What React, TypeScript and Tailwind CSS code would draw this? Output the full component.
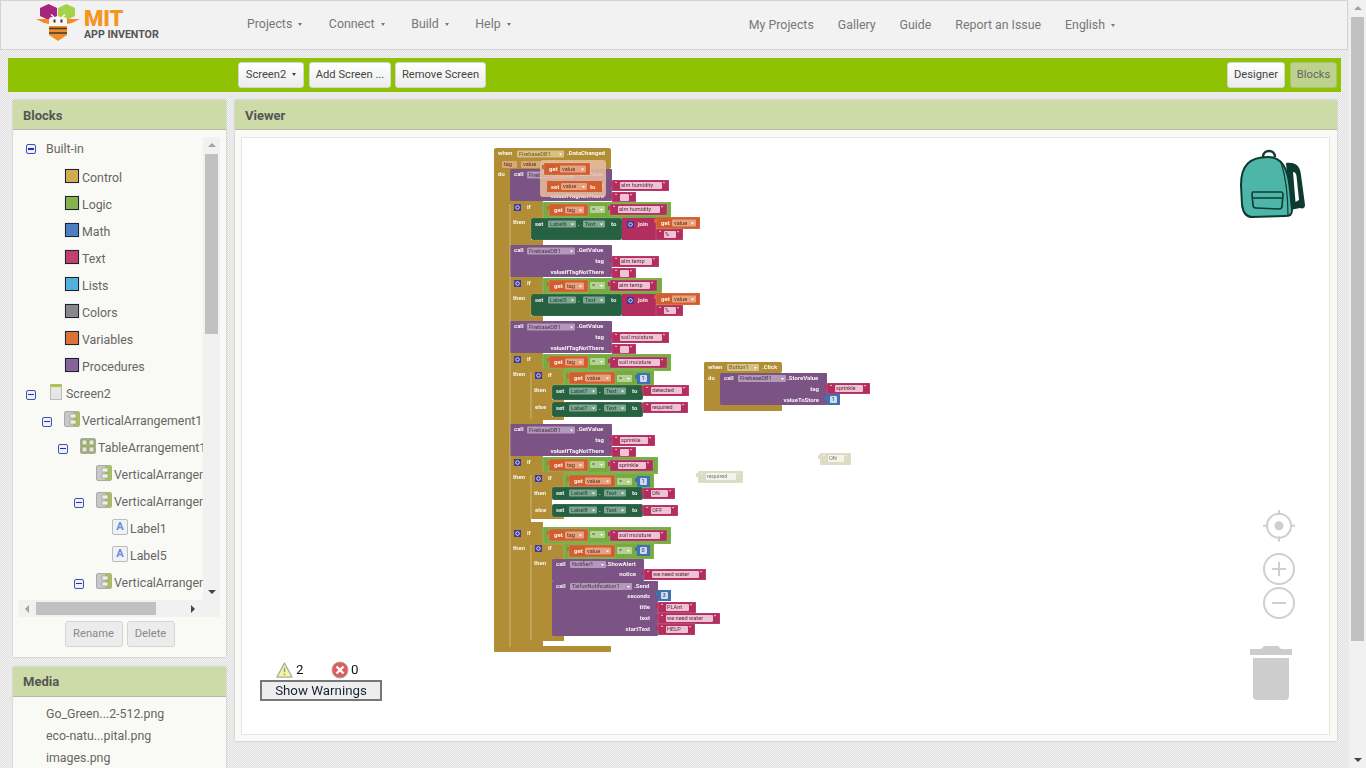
import React from 'react';

const GOLD = '#B18E35';
const RIM = '#d8c68f';
const PURPLE = '#7C5385';
const PINK = '#B32D5E';
const ORANGE = '#D05F2D';
const LOGIC = '#77AB41';
const SETTER = '#266141';
const MATH = '#3F71B5';

const dotted =
  'bg-[conic-gradient(#e2e2e2_25%,#f1f1f1_0_50%,#e2e2e2_0_75%,#f1f1f1_0)] bg-[length:2px_2px]';

type BoxProps = { x: number; y: number; w: number; h: number; c: string; r?: number; o?: number };

const Box = ({ x, y, w, h, c, r = 0.8, o }: BoxProps) => (
  <rect x={x} y={y} width={w} height={h} rx={r} fill={c} opacity={o} />
);

const Lbl = ({ x, y, t, end, c = '#fff' }: { x: number; y: number; t: string; end?: boolean; c?: string }) => (
  <text x={x} y={y} fontSize="6" fontWeight="700" fill={c} textAnchor={end ? 'end' : 'start'} opacity="0.92">
    {t}
  </text>
);

const Fld = ({ x, y, w, t, c = '#fff', ink = '#444', drop = true }: { x: number; y: number; w: number; t: string; c?: string; ink?: string; drop?: boolean }) => (
  <g>
    <rect x={x} y={y} width={w} height="7" rx="1" fill={c} opacity="0.6" />
    <text x={x + 2} y={y + 5.4} fontSize="5.6" fill={ink}>
      {t}
    </text>
    {drop && <path d={`M${x + w - 5} ${y + 3}h3l-1.5 2z`} fill="#fff" />}
  </g>
);

const Str = ({ x, y, w, t, h = 11, c = PINK, ink = '#5a2a3c', f = '#eec3d3' }: { x: number; y: number; w: number; t: string; h?: number; c?: string; ink?: string; f?: string }) => (
  <g>
    <rect x={x - 2} y={y + 2} width="3" height="4" fill={c} />
    <rect x={x} y={y} width={w} height={h} fill={c} stroke="#fff" strokeOpacity="0.3" strokeWidth="0.5" />
    <text x={x + 3} y={y + 6} fontSize="6" fill="#fff">
      “
    </text>
    <rect x={x + 8} y={y + 2} width={w - 15} height="7" rx="1" fill={f} />
    <text x={x + 9} y={y + 7.4} fontSize="5.6" fill={ink}>
      {t}
    </text>
    <text x={x + w - 6} y={y + 6} fontSize="6" fill="#fff">
      ”
    </text>
  </g>
);

const Num = ({ x, y, t }: { x: number; y: number; t: string }) => (
  <g>
    <rect x={x - 2} y={y + 2} width="3" height="4" fill={MATH} />
    <rect x={x} y={y} width="13" height="11" fill={MATH} />
    <rect x={x + 3} y={y + 2} width="7" height="7" rx="1" fill="#cfdcf0" />
    <text x={x + 4.6} y={y + 7.4} fontSize="5.6" fill="#234">
      {t}
    </text>
  </g>
);

const Get = ({ x, y, w, t }: { x: number; y: number; w: number; t: string }) => (
  <g>
    <rect x={x - 2} y={y + 2} width="3" height="4" fill={ORANGE} />
    <rect x={x} y={y} width={w} height="12" fill={ORANGE} stroke="#fff" strokeOpacity="0.3" strokeWidth="0.5" />
    <Lbl x={x + 5} y={y + 8} t="get" />
    <Fld x={x + 16} y={y + 2.5} w={w - 20} t={t} c="#f3cdb8" ink="#5a3320" />
  </g>
);

const Mut = ({ x, y }: { x: number; y: number }) => (
  <g>
    <rect x={x} y={y} width="7" height="7" fill="#3f3a9a" />
    <circle cx={x + 3.5} cy={y + 3.5} r="1.8" fill="none" stroke="#fff" strokeWidth="0.8" />
  </g>
);

// the "get x = y" socket of an if block
const Cond = ({ x, y, w, h = 17, children }: { x: number; y: number; w: number; h?: number; children: React.ReactNode }) => (
  <g>
    <rect x={x - 2} y={y + 3} width="3" height="4" fill={LOGIC} />
    <rect x={x} y={y} width={w} height={h} fill={LOGIC} stroke="#fff" strokeOpacity="0.3" strokeWidth="0.5" />
    {children}
  </g>
);

const Eq = ({ x, y }: { x: number; y: number }) => <Fld x={x} y={y} w={15} t=" =" c="#dfeccb" ink="#345" />;

const SetRow = ({ x, y, w, h, name }: { x: number; y: number; w: number; h: number; name: string }) => (
  <g>
    <rect x={x} y={y} width={w} height={h} rx="2" fill={SETTER} stroke="#fff" strokeOpacity="0.25" strokeWidth="0.5" />
    <Lbl x={x + 4} y={y + 8} t="set" />
    <Fld x={x + 17} y={y + 2.5} w={28} t={name} c="#b9d4c4" ink="#23473a" />
    <Lbl x={x + 47} y={y + 8} t="." />
    <Fld x={x + 52} y={y + 2.5} w={22} t="Text" c="#b9d4c4" ink="#23473a" />
    <Lbl x={x + 80} y={y + 8} t="to" />
  </g>
);

const CallGetValue = ({ y, tag, emptyY }: { y: number; tag: React.ReactNode; emptyY: number }) => (
  <g>
    <Box x={510} y={y} w={102} h={32} c={PURPLE} />
    <Lbl x={514} y={y + 7} t="call" />
    <Fld x={527} y={y + 2.5} w={48} t="FirebaseDB1" c="#d8c8dc" ink="#4a3350" />
    <Lbl x={577} y={y + 7} t=".GetValue" />
    <Lbl x={604} y={y + 18} t="tag" end />
    <Lbl x={604} y={y + 29} t="valueIfTagNotThere" end />
    {tag}
    <Str x={612} y={emptyY} w={24} t="" h={10} />
  </g>
);

const IfHead = ({ y, x = 510 }: { y: number; x?: number }) => (
  <g>
    <Mut x={x + 4} y={y + 3} />
    <Lbl x={x + 17} y={y + 8} t="if" />
    <Lbl x={x + 3} y={y + 23} t="then" />
  </g>
);

const JoinRow = ({ y }: { y: number }) => (
  <g>
    <Box x={622} y={y} w={61} h={22} c={PINK} r={0} />
    <Mut x={627} y={y + 3} />
    <Lbl x={638} y={y + 8} t="join" />
    <Get x={656} y={y - 1} w={44} t="value" />
    <Str x={656} y={y + 11} w={27} t=" %" />
  </g>
);

const Workspace = () => (
  <svg
    viewBox="242 138 1087 596"
    className="absolute inset-0 h-full w-full blur-[0.5px]"
    fontFamily="Roboto, sans-serif"
  >
    {/* when FirebaseDB1.DataChanged */}
    <Box x={494} y={148} w={117} h={21} c={GOLD} r={2} />
    <Box x={494} y={160} w={16} h={492} c={GOLD} r={2} />
    <Box x={494} y={646} w={117} h={6} c={GOLD} r={1} />
    <Lbl x={498} y={155} t="when" />
    <Fld x={517} y={150.5} w={47} t="FirebaseDB1" c="#efe2bb" ink="#6c5a28" />
    <Lbl x={567} y={155} t=".DataChanged" />
    <Fld x={502} y={161} w={15} t="tag" c="#f2b9a0" ink="#5a3320" drop={false} />
    <Fld x={521} y={161} w={19} t="value" c="#f2b9a0" ink="#5a3320" drop={false} />
    <Lbl x={498} y={176} t="do" />

    {/* humidity */}
    <CallGetValue y={169} tag={<Str x={612} y={180} w={57} t="alm humidity" />} emptyY={192} />
    <Box x={510} y={201} w={33} h={18} c={GOLD} r={0} />
    <Box x={510} y={201} w={21} h={44} c={GOLD} r={0} />
    <Box x={510} y={240} w={33} h={5} c={GOLD} r={0} />
    <IfHead y={201} />
    <Cond x={543} y={202} w={128}>
      <Get x={549} y={204} w={39} t="tag" />
      <Eq x={590} y={206} />
      <Str x={610} y={204} w={57} t="alm humidity" />
    </Cond>
    <SetRow x={531} y={218} w={91} h={22} name="Label6" />
    <JoinRow y={218} />

    {/* temperature */}
    <CallGetValue y={245} tag={<Str x={612} y={256} w={47} t="alm temp" />} emptyY={268} />
    <Box x={510} y={277} w={33} h={18} c={GOLD} r={0} />
    <Box x={510} y={277} w={21} h={44} c={GOLD} r={0} />
    <Box x={510} y={316} w={33} h={5} c={GOLD} r={0} />
    <IfHead y={277} />
    <Cond x={543} y={278} w={119}>
      <Get x={549} y={280} w={39} t="tag" />
      <Eq x={590} y={282} />
      <Str x={610} y={280} w={47} t="alm temp" />
    </Cond>
    <SetRow x={531} y={294} w={91} h={22} name="Label5" />
    <JoinRow y={294} />

    {/* soil moisture */}
    <CallGetValue y={321} tag={<Str x={612} y={332} w={57} t="soil moisture" />} emptyY={344} />
    <Box x={510} y={353} w={33} h={18} c={GOLD} r={0} />
    <Box x={510} y={353} w={21} h={71} c={GOLD} r={0} />
    <Box x={510} y={419} w={33} h={5} c={GOLD} r={0} />
    <IfHead y={353} />
    <Cond x={543} y={354} w={128}>
      <Get x={549} y={356} w={39} t="tag" />
      <Eq x={590} y={358} />
      <Str x={610} y={357} w={57} t="soil moisture" />
    </Cond>
    <Box x={531} y={369} w={33} h={17} c={GOLD} r={0} />
    <Box x={531} y={369} w={21} h={50} c={GOLD} r={0} />
    <Box x={531} y={400} w={33} h={3} c={GOLD} r={0} />
    <Box x={531} y={417} w={33} h={3} c={GOLD} r={0} />
    <Box x={530.6} y={372} w={0.7} h={47} c={RIM} r={0} />
    <IfHead y={369} x={531} />
    <Lbl x={535} y={409} t="else" />
    <Cond x={564} y={370} w={90} h={18}>
      <Get x={569} y={372} w={46} t="value" />
      <Eq x={617} y={375} />
      <Num x={637} y={373} t="1" />
    </Cond>
    <SetRow x={552} y={385} w={91} h={15} name="Label7" />
    <Str x={643} y={385} w={46} t="detected" />
    <SetRow x={552} y={402} w={91} h={15} name="Label7" />
    <Str x={643} y={402} w={45} t="required" />

    {/* sprinkle */}
    <CallGetValue y={424} tag={<Str x={612} y={435} w={43} t="sprinkle" />} emptyY={447} />
    <Box x={510} y={456} w={33} h={18} c={GOLD} r={0} />
    <Box x={510} y={456} w={21} h={190} c={GOLD} r={0} />
    <Box x={510} y={522} w={33} h={5} c={GOLD} r={0} />
    <IfHead y={456} />
    <Cond x={543} y={457} w={115}>
      <Get x={549} y={459} w={39} t="tag" />
      <Eq x={590} y={461} />
      <Str x={610} y={460} w={43} t="sprinkle" />
    </Cond>
    <Box x={531} y={472} w={33} h={17} c={GOLD} r={0} />
    <Box x={531} y={472} w={21} h={47} c={GOLD} r={0} />
    <Box x={531} y={516} w={33} h={3} c={GOLD} r={0} />
    <Box x={530.6} y={475} w={0.7} h={44} c={RIM} r={0} />
    <IfHead y={472} x={531} />
    <Lbl x={535} y={512} t="else" />
    <Cond x={564} y={473} w={90} h={17}>
      <Get x={569} y={475} w={46} t="value" />
      <Eq x={617} y={478} />
      <Num x={637} y={476} t="1" />
    </Cond>
    <SetRow x={552} y={487} w={91} h={13} name="Label8" />
    <Str x={643} y={488} w={32} t="ON" />
    <SetRow x={552} y={504} w={91} h={13} name="Label8" />
    <Str x={643} y={505} w={35} t="OFF" />

    {/* third if, notifications */}
    <Box x={510} y={527} w={33} h={18} c={GOLD} r={0} />
    <Box x={510} y={641} w={33} h={6} c={GOLD} r={0} />
    <Box x={531} y={542} w={33} h={17} c={GOLD} r={0} />
    <Box x={531} y={542} w={21} h={98} c={GOLD} r={0} />
    <Box x={531} y={636} w={33} h={5} c={GOLD} r={0} />
    <Box x={530.6} y={545} w={0.7} h={95} c={RIM} r={0} />
    <Box x={509.6} y={204} w={0.7} h={443} c={RIM} r={0} />
    <IfHead y={527} />
    <IfHead y={542} x={531} />
    <Cond x={543} y={527} w={128}>
      <Get x={549} y={529} w={39} t="tag" />
      <Eq x={590} y={531} />
      <Str x={610} y={530} w={57} t="soil moisture" />
    </Cond>
    <Cond x={564} y={543} w={90} h={16}>
      <Get x={569} y={545} w={46} t="value" />
      <Eq x={617} y={547} />
      <Num x={637} y={545} t="0" />
    </Cond>
    <Box x={552} y={559} w={92} h={22} c={PURPLE} />
    <Lbl x={556} y={566} t="call" />
    <Fld x={570} y={561} w={36} t="Notifier1" c="#d8c8dc" ink="#4a3350" />
    <Lbl x={606} y={566} t=".ShowAlert" />
    <Lbl x={636} y={576} t="notice" end />
    <Str x={644} y={569} w={62} t="we need water" />
    <Box x={552} y={581} w={106} h={55} c={PURPLE} />
    <Lbl x={556} y={588} t="call" />
    <Fld x={570} y={583} w={62} t="TaifunNotification1" c="#d8c8dc" ink="#4a3350" />
    <Lbl x={634} y={588} t=".Send" />
    <Lbl x={650} y={598} t="seconds" end />
    <Lbl x={650} y={609} t="title" end />
    <Lbl x={650} y={620} t="text" end />
    <Lbl x={650} y={631} t="startText" end />
    <Num x={658} y={590} t="3" />
    <Str x={658} y={602} w={38} t="PLAnt" />
    <Str x={658} y={613} w={62} t="we need water" />
    <Str x={658} y={624} w={37} t="HELP" />

    {/* dragged collapsed getters */}
    <rect x={540} y={160} width={66} height={37} rx="3" fill="#e8bea0" opacity="0.85" />
    <Get x={544} y={163} w={46} t="value" />
    <rect x={547} y={181} width={55} height={11} fill={ORANGE} />
    <Lbl x={551} y={189} t="set" />
    <Fld x={561} y={183} w={26} t="value" c="#f3cdb8" ink="#5a3320" />
    <Lbl x={590} y={189} t="to" />

    {/* when Button1.Click */}
    <Box x={704} y={362} w={78} h={11} c={GOLD} r={2} />
    <Box x={704} y={362} w={16} h={49} c={GOLD} r={2} />
    <Box x={704} y={405} w={78} h={6} c={GOLD} r={1} />
    <Lbl x={708} y={369} t="when" />
    <Fld x={727} y={364} w={32} t="Button1" c="#efe2bb" ink="#6c5a28" />
    <Lbl x={762} y={369} t=".Click" />
    <Lbl x={708} y={380} t="do" />
    <Box x={720} y={373} w={107} h={32} c={PURPLE} />
    <Lbl x={724} y={380} t="call" />
    <Fld x={738} y={375} w={48} t="FirebaseDB1" c="#d8c8dc" ink="#4a3350" />
    <Lbl x={787} y={380} t=".StoreValue" />
    <Lbl x={819} y={391} t="tag" end />
    <Lbl x={819} y={402} t="valueToStore" end />
    <Str x={827} y={383} w={43} t="sprinkle" />
    <Num x={827} y={394} t="1" />

    {/* disabled text blocks */}
    <Str x={820} y={453} w={31} t="ON" h={12} c="#dcdcc4" f="#f4f4ea" ink="#777" />
    <Str x={698} y={471} w={45} t="required" h={12} c="#dcdcc4" f="#f4f4ea" ink="#777" />
  </svg>
);

const Backpack = () => (
  <svg viewBox="1238 148 70 72" className="absolute left-[996px] top-[10px] h-[72px] w-[70px]">
    <path d="M1286 163 C1296 162 1300 166 1301 175 L1305 205 C1305 208 1303 209 1300 208 L1290 210 Z" fill="#0e3a2f" />
    <path d="M1293 172 C1295 172 1296 173 1296.5 176 L1299 200 L1295.5 202 Z" fill="#fff" />
    <path d="M1263 157 C1263 149 1275 149 1275 157" fill="none" stroke="#0e3a2f" strokeWidth="2.4" />
    <path
      d="M1241 185 C1241 165 1250 157 1268 157 C1282 157 1288 168 1290 190 L1292 210 C1292 215 1290 216 1285 216 L1252 217 C1246 217 1243 212 1242 205 Z"
      fill="#4db6a9"
      stroke="#0e3a2f"
      strokeWidth="2"
    />
    <path d="M1281 162 C1285 175 1288 195 1288 215" fill="none" stroke="#0e3a2f" strokeWidth="1.2" />
    <path
      d="M1253 192 L1281 192 C1283 192 1283 193 1283 195 L1282 206 C1282 208 1281 209 1279 209 L1256 208 C1254 208 1253 207 1253 205 L1252 195 C1252 193 1252 192 1253 192 Z M1252 198 L1283 198"
      fill="none"
      stroke="#0e3a2f"
      strokeWidth="1.6"
    />
  </svg>
);

const MapControls = () => (
  <svg viewBox="1245 505 52 200" className="absolute left-[1003px] top-[367px] h-[200px] w-[52px]" fill="none" stroke="#cfcfcf">
    <circle cx="1279" cy="525.7" r="12" strokeWidth="2" />
    <circle cx="1279" cy="525.7" r="4.5" fill="#cfcfcf" stroke="none" />
    <path d="M1279 510v5M1279 536.5v5M1263 525.7h5M1290 525.7h5" strokeWidth="2" />
    <circle cx="1279" cy="569" r="15" strokeWidth="2" />
    <path d="M1272 569h14M1279 562v14" strokeWidth="2" />
    <circle cx="1279" cy="603" r="15" strokeWidth="2" />
    <path d="M1272 603h14" strokeWidth="2" />
    <path
      d="M1250 649 H1261 L1264 646 H1278 L1281 649 H1292 V655 H1250 Z M1253 658 H1289 V696 Q1289 700 1285 700 H1257 Q1253 700 1253 696 Z"
      fill="#cdcdcd"
      stroke="none"
    />
  </svg>
);

const Warnings = () => (
  <div className="absolute left-[18px] top-[522px] flex w-[122px] flex-col font-['Roboto',sans-serif] text-[13.3px] text-[#111]">
    <div className="ml-[16px] flex h-[20px] items-center">
      <svg viewBox="0 0 18 17" className="h-[16px] w-[17px]">
        <path d="M9 1 L17 16 H1 Z" fill="#f3f3a0" stroke="#aaa" strokeWidth="1.4" strokeLinejoin="round" />
        <path d="M9 6v5M9 12.5v1.5" stroke="#999" strokeWidth="1.5" />
      </svg>
      <span className="ml-[3px] w-[35px]">2</span>
      <svg viewBox="0 0 18 18" className="h-[18px] w-[18px]">
        <circle cx="9" cy="9" r="8" fill="#e25b5b" stroke="#aaa" strokeWidth="1" />
        <path d="M5.5 5.5l7 7M12.5 5.5l-7 7" stroke="#fff" strokeWidth="2.4" />
      </svg>
      <span className="ml-[2px]">0</span>
    </div>
    <button className="h-[21px] w-[122px] border-2 border-[#777] bg-[#eee] text-[13.3px] leading-none text-[#1a2233]">
      Show Warnings
    </button>
  </div>
);

const LogoMark = () => (
  <svg viewBox="0 0 46 42" className="mb-[2px] h-[42px] w-[46px] shrink-0">
    <path d="M12.5 1 L21 5 V13 L12.5 17 L4 13 V5 Z" fill="#a5257d" />
    <path d="M30.5 1 L39 5 V13 L30.5 17 L22 13 V5 Z" fill="#a6d14a" />
    <path d="M0 16 H14 L13 21 L8 20 Z M44 16 H30 L31 21 L36 20 Z" fill="#f28c28" />
    <rect x="13" y="14" width="18" height="10" rx="3" fill="#f6f6f6" />
    <rect x="17.5" y="16.5" width="2" height="3" fill="#333" />
    <rect x="24.5" y="16.5" width="2" height="3" fill="#333" />
    <path d="M13 23 H31 V32 L22 38 L13 32 Z" fill="#f28c28" />
    <path d="M13 25.5 H31 M13 30 H31" stroke="#3a3a3a" strokeWidth="1.6" />
    <path d="M15 11.5 L18 14 M29 11.5 L26 14" stroke="#fff" strokeWidth="1.2" />
  </svg>
);

const NavItem = ({ label }: { label: string }) => (
  <span className="flex items-center gap-[6px] text-[12.35px] text-[#777]">
    {label}
    <span className="mt-[1px] h-0 w-0 border-x-[2.5px] border-t-[3px] border-x-transparent border-t-[#777]" />
  </span>
);

const ToolButton = ({ children, width, active = false }: { children: React.ReactNode; width: string; active?: boolean }) => (
  <div
    className={
      active
        ? `flex h-[26px] items-center justify-center rounded-[3px] border border-[#a9c276] bg-[#bdd28d] text-[11.2px] text-[#666] ${width}`
        : `flex h-[26px] items-center justify-center rounded-[3px] border border-[#d5d5d5] bg-gradient-to-b from-white to-[#ececec] text-[11.2px] text-[#444] ${width}`
    }
  >
    {children}
  </div>
);

const Toggle = () => (
  <span className="flex h-[10px] w-[10px] shrink-0 items-center justify-center rounded-[2px] border border-[#3f51b5] bg-[#eef0fa]">
    <span className="h-[1.5px] w-[6px] bg-[#2233aa]" />
  </span>
);

const categories = [
  ['Control', 'bg-[#CFAC50]'],
  ['Logic', 'bg-[#85B14F]'],
  ['Math', 'bg-[#4C7FBF]'],
  ['Text', 'bg-[#C23F70]'],
  ['Lists', 'bg-[#52B1DC]'],
  ['Colors', 'bg-[#888888]'],
  ['Variables', 'bg-[#DD7236]'],
  ['Procedures', 'bg-[#88639A]'],
];

const ArrangementIcon = ({ table = false }: { table?: boolean }) => (
  <svg viewBox="0 0 16 16" className="mb-[6px] block h-[16px] w-[16px] shrink-0">
    <rect x="0.5" y="0.5" width="15" height="15" rx="1.5" fill={table ? '#a9c64a' : '#c8c8c8'} stroke="#aaa" />
    {table ? (
      <path d="M2 2h5v5H2zM9 2h5v5H9zM2 9h5v5H2zM9 9h5v5H9z" fill="#e4e4e4" stroke="#777" strokeWidth="0.6" />
    ) : (
      <>
        <rect x="9" y="1" width="6" height="14" fill="#a9c64a" />
        <rect x="6" y="3" width="6" height="4" fill="#eee" stroke="#888" strokeWidth="0.5" />
        <rect x="6" y="9" width="6" height="4" fill="#eee" stroke="#888" strokeWidth="0.5" />
      </>
    )}
  </svg>
);

const LabelIcon = () => (
  <span className="mb-[6px] flex h-[16px] w-[16px] shrink-0 items-center justify-center rounded-[2px] border border-[#bbb] bg-[#eef2f8] text-[11px] font-bold leading-none text-[#6a8fcc]">
    A
  </span>
);

const BlocksPanel = () => (
  <section className="flex h-[557px] flex-col bg-[#F9FAF5] shadow-[0_0_2px_#bbb]">
    <h2 className="flex h-[30px] shrink-0 items-center border-b border-[#b5b9a5] bg-[#CDDBA9] px-[10px] pt-[2px] text-[13px] font-bold text-[#555]">
      Blocks
    </h2>
    <div className="relative mx-[6px] mt-[7px] h-[480px] overflow-hidden text-[12.35px] text-[#666]">
      <div className="w-[184px] overflow-hidden">
        <div className="flex h-[28px] items-center pb-[4px] pl-[7px]">
          <Toggle />
          <span className="ml-[10px]">Built-in</span>
        </div>
        {categories.map(([name, color]) => (
          <div key={name} className="flex h-[27px] items-center pl-[46px]">
            <span className={`mb-[6px] h-[14px] w-[14px] shrink-0 border border-[#222] shadow-[0_0_0_1px_#e8eef8] ${color}`} />
            <span className="ml-[3px] whitespace-nowrap">{name}</span>
          </div>
        ))}
        <div className="flex h-[27px] items-center pl-[7px]">
          <Toggle />
          <span className="mb-[6px] ml-[14px] h-[16px] w-[12px] shrink-0 rounded-[1px] border border-[#bbb] border-t-[3px] border-t-[#a9c64a] bg-[#e6e6e6]" />
          <span className="ml-[4px] whitespace-nowrap">Screen2</span>
        </div>
        <div className="flex h-[27px] items-center pl-[23px]">
          <Toggle />
          <span className="ml-[12px] shrink-0"><ArrangementIcon /></span>
          <span className="ml-[2px] whitespace-nowrap">VerticalArrangement1</span>
        </div>
        <div className="flex h-[27px] items-center pl-[39px]">
          <Toggle />
          <span className="ml-[12px] shrink-0"><ArrangementIcon table /></span>
          <span className="ml-[2px] whitespace-nowrap">TableArrangement1</span>
        </div>
        <div className="flex h-[27px] items-center pl-[77px]">
          <ArrangementIcon />
          <span className="ml-[2px] whitespace-nowrap">VerticalArrangement2</span>
        </div>
        <div className="flex h-[27px] items-center pl-[55px]">
          <Toggle />
          <span className="ml-[12px] shrink-0"><ArrangementIcon /></span>
          <span className="ml-[2px] whitespace-nowrap">VerticalArrangement3</span>
        </div>
        <div className="flex h-[27px] items-center pl-[93px]">
          <LabelIcon />
          <span className="ml-[2px]">Label1</span>
        </div>
        <div className="flex h-[27px] items-center pl-[93px]">
          <LabelIcon />
          <span className="ml-[2px]">Label5</span>
        </div>
        <div className="flex h-[27px] items-center pl-[55px]">
          <Toggle />
          <span className="ml-[12px] shrink-0"><ArrangementIcon /></span>
          <span className="ml-[2px] whitespace-nowrap">VerticalArrangement4</span>
        </div>
        <div className="flex h-[27px] items-center pl-[93px]">
          <LabelIcon />
        </div>
      </div>
      {/* tree scrollbars */}
      <div className="absolute right-0 top-0 flex h-[463px] w-[17px] flex-col items-center bg-[#f1f1f1]">
        <span className="mt-[6px] h-0 w-0 border-x-[4px] border-b-[4px] border-x-transparent border-b-[#a3a3a3]" />
        <span className="mt-[7px] h-[180px] w-[13px] bg-[#c1c1c1]" />
        <span className="mt-auto mb-[6px] h-0 w-0 border-x-[4px] border-t-[4px] border-x-transparent border-t-[#444]" />
      </div>
      <div className="absolute bottom-0 left-0 flex h-[17px] w-full items-center bg-[#f1f1f1]">
        <span className="ml-[6px] h-0 w-0 border-y-[4px] border-r-[4px] border-y-transparent border-r-[#a3a3a3]" />
        <span className="ml-[7px] h-[13px] w-[120px] bg-[#c1c1c1]" />
        <span className="ml-[35px] h-0 w-0 border-y-[4px] border-l-[4px] border-y-transparent border-l-[#444]" />
      </div>
    </div>
    <div className="mt-[4px] flex justify-center gap-[4px] text-[11.2px] text-[#8a8a8a]">
      <span className="flex h-[26px] w-[58px] items-center justify-center rounded-[3px] border border-[#d5d5d5] bg-[#ececec]">Rename</span>
      <span className="flex h-[26px] w-[48px] items-center justify-center rounded-[3px] border border-[#d5d5d5] bg-[#ececec]">Delete</span>
    </div>
  </section>
);

const MediaPanel = () => (
  <section className="mt-[10px] h-[140px] bg-[#F9FAF5] shadow-[0_0_2px_#bbb]">
    <h2 className="flex h-[30px] items-center border-b border-[#b5b9a5] bg-[#CDDBA9] px-[10px] text-[13px] font-bold text-[#555]">
      Media
    </h2>
    <ul className="pl-[33px] pt-[6px] text-[12.35px] leading-[22px] text-[#666]">
      <li>Go_Green...2-512.png</li>
      <li>eco-natu...pital.png</li>
      <li>images.png</li>
    </ul>
  </section>
);

const App: React.FC = () => {
  return (
    <div className="flex h-screen w-full overflow-hidden font-['Roboto',sans-serif]">
      <div className={`h-full w-[1349px] shrink-0 overflow-hidden ${dotted}`}>
        <header className="flex h-[50px] w-[1348px] items-center border border-[#d4d4d4] bg-[#F2F2F2]">
          <div className="ml-[35px] flex w-[211px] items-center">
            <LogoMark />
            <div className="ml-[2px] flex flex-col pb-[3px]">
              <span className="text-[22px] font-black leading-[21px] text-[#f7941d]">MIT</span>
              <span className="text-[10.6px] font-bold leading-[11px] text-[#555]">APP INVENTOR</span>
            </div>
          </div>
          <nav className="-mt-px flex gap-[26.6px]">
            <NavItem label="Projects" />
            <NavItem label="Connect" />
            <NavItem label="Build" />
            <NavItem label="Help" />
          </nav>
          <nav className="ml-auto mr-[232px] flex items-center gap-[24px] text-[12.35px] text-[#777]">
            <span>My Projects</span>
            <span>Gallery</span>
            <span>Guide</span>
            <span>Report an Issue</span>
            <NavItem label="English" />
          </nav>
        </header>

        <div className="ml-[8px] mt-[8px] flex h-[34px] w-[1333px] items-center bg-[#8FC202] pr-[4px]">
          <div className="ml-[230px] flex gap-[5px]">
            <ToolButton width="w-[66px]">
              <span className="flex items-center gap-[6px]">
                Screen2
                <span className="h-0 w-0 border-x-[2.5px] border-t-[3px] border-x-transparent border-t-[#444]" />
              </span>
            </ToolButton>
            <ToolButton width="w-[82px]">Add Screen ...</ToolButton>
            <ToolButton width="-ml-px w-[91px]">Remove Screen</ToolButton>
          </div>
          <div className="ml-auto flex gap-[5px]">
            <ToolButton width="w-[58px]">Designer</ToolButton>
            <ToolButton width="w-[47px]" active>Blocks</ToolButton>
          </div>
        </div>

        <div className="ml-[13px] mt-[8px] flex gap-[9px]">
          <div className="w-[213px] shrink-0">
            <BlocksPanel />
            <MediaPanel />
          </div>
          <section className="flex h-[641px] w-[1102px] shrink-0 flex-col bg-[#F9FAF5] shadow-[0_0_2px_#bbb]">
            <h2 className="flex h-[30px] shrink-0 items-center border-b border-[#b5b9a5] bg-[#CDDBA9] px-[10px] pt-[2px] text-[13px] font-bold text-[#555]">
              Viewer
            </h2>
            <div className="relative ml-[6px] mt-[7px] h-[598px] w-[1089px] border border-[#e6e6de] bg-white">
              <Workspace />
              <Backpack />
              <MapControls />
              <Warnings />
            </div>
          </section>
        </div>
      </div>

      {/* page scrollbar */}
      <div className="flex h-full w-[17px] flex-col items-center bg-[#f1f1f1]">
        <span className="mt-[6px] h-0 w-0 border-x-[4px] border-b-[4px] border-x-transparent border-b-[#a3a3a3]" />
        <span className="mt-[7px] h-[624px] w-[13px] bg-[#c1c1c1]" />
        <span className="mb-[6px] mt-auto h-0 w-0 border-x-[4px] border-t-[4px] border-x-transparent border-t-[#444]" />
      </div>
    </div>
  );
};

export default App;
